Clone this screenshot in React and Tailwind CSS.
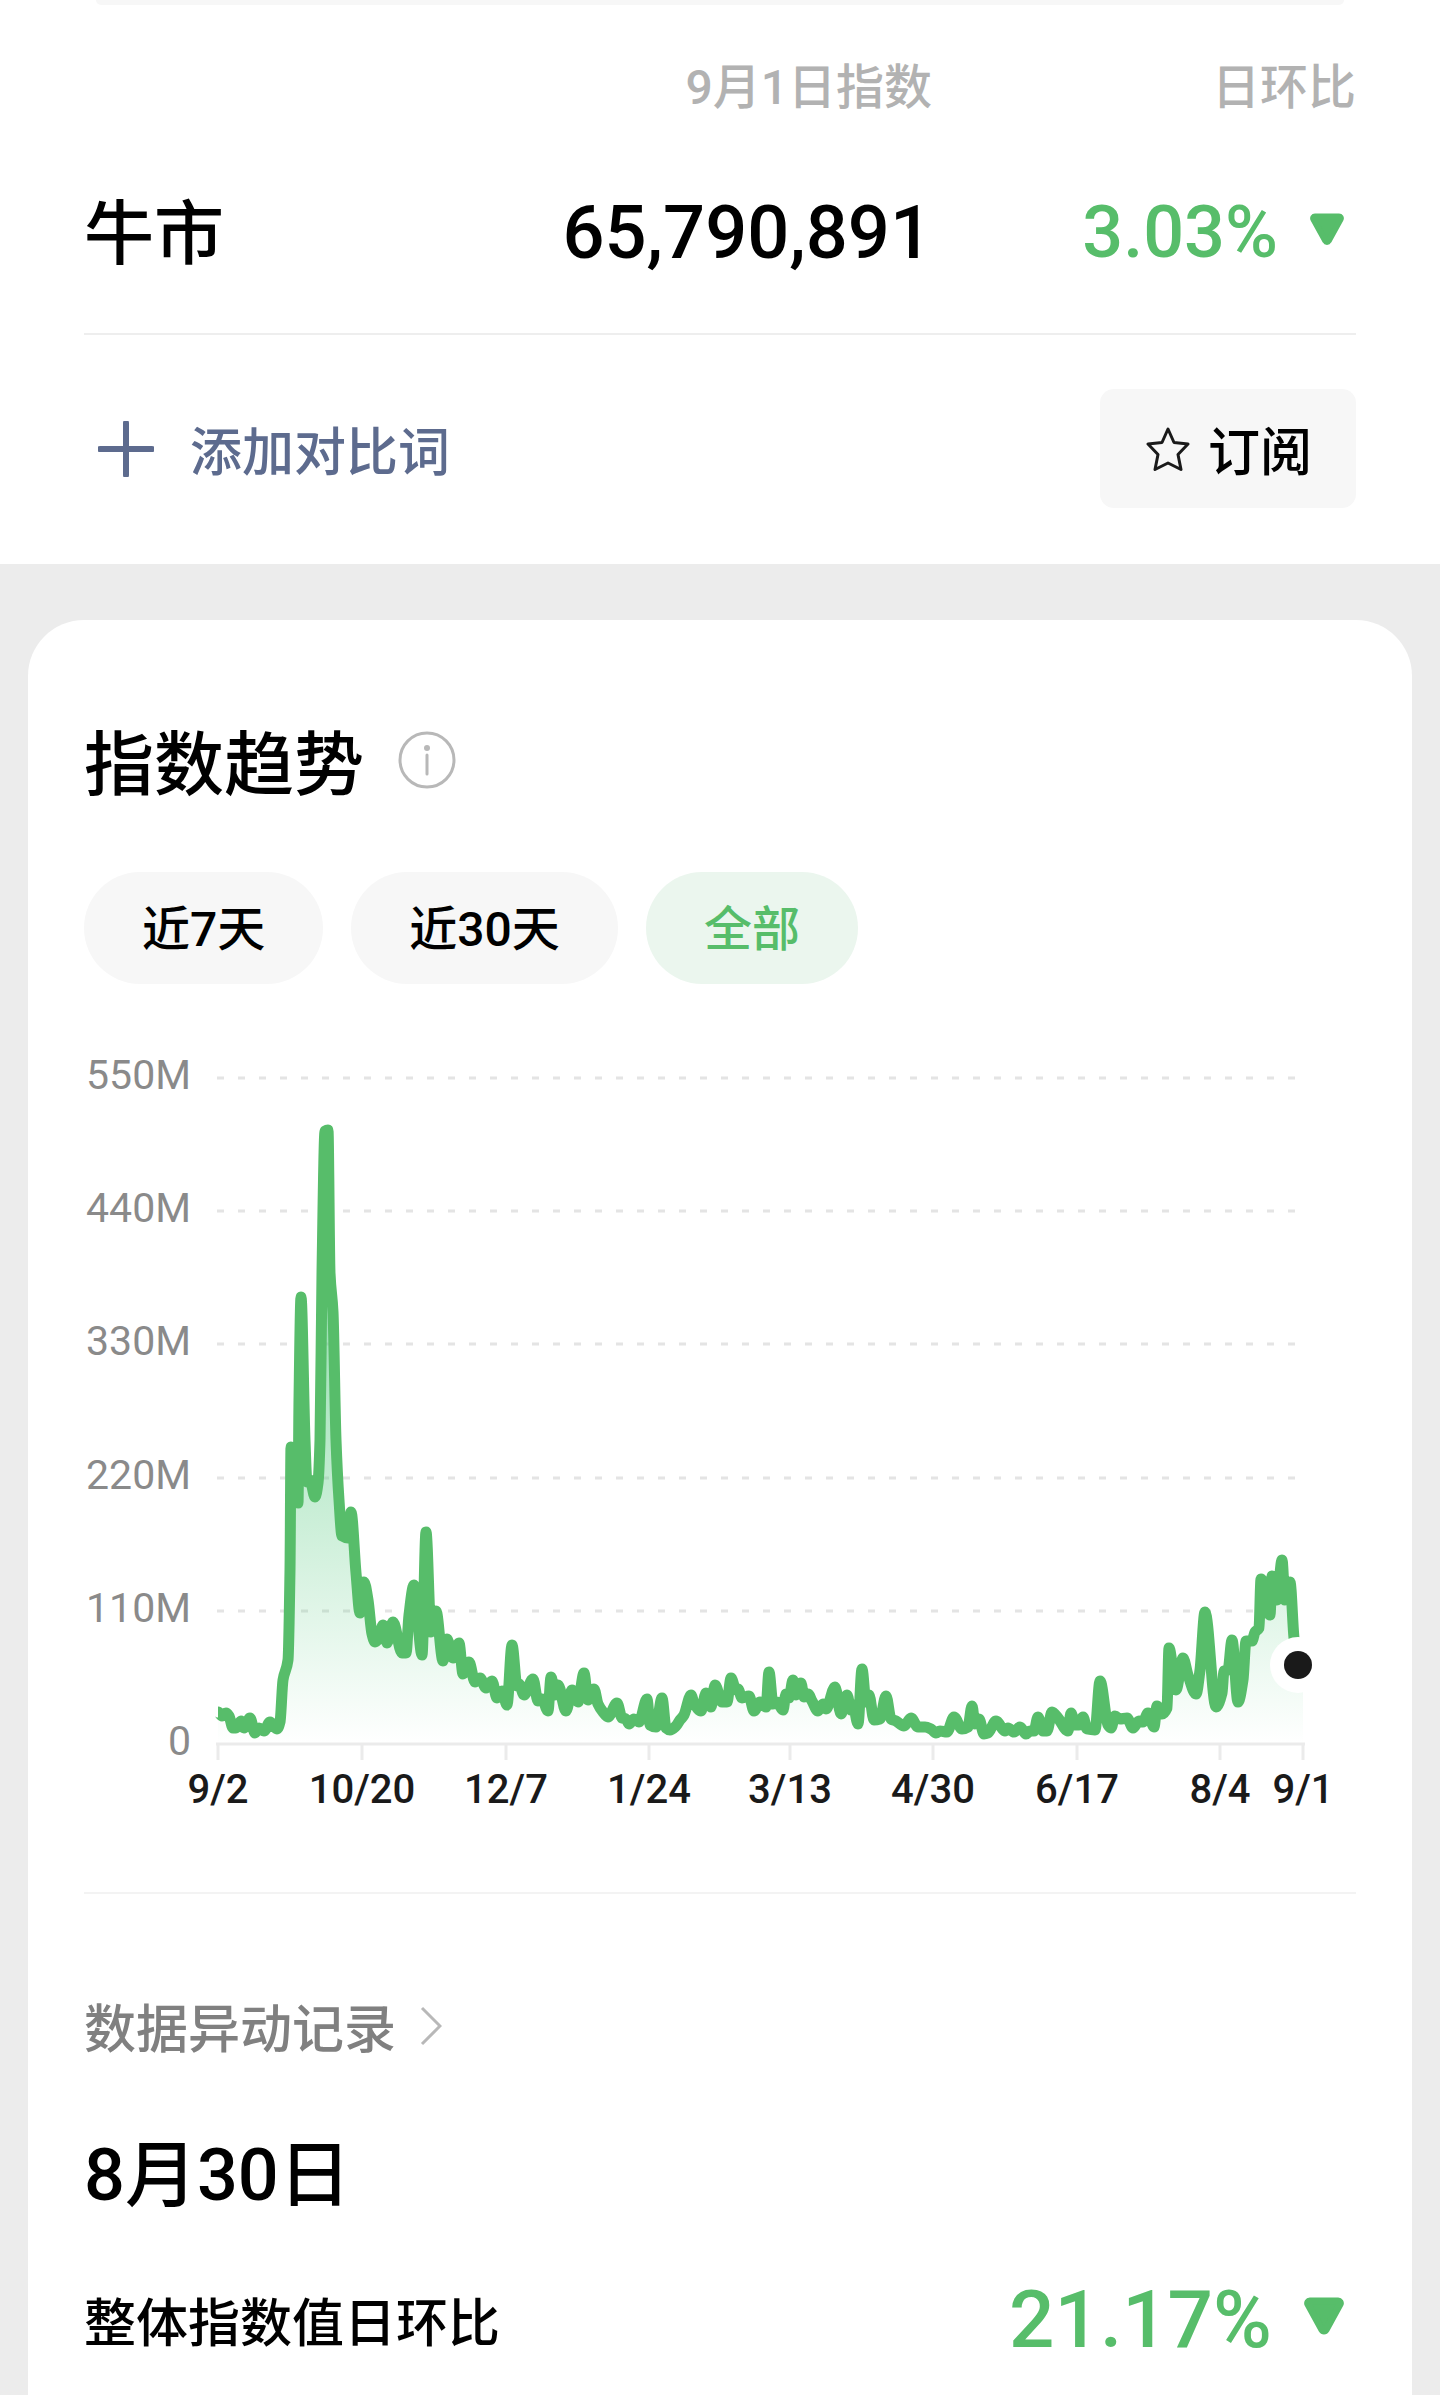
import { useState } from "react";
import clsx from "clsx";

const GREEN = "#57bd6a";

const ranges = [
  { id: "7", label: "近7天" },
  { id: "30", label: "近30天" },
  { id: "all", label: "全部" },
];

const yTicks = [
  { label: "550M", y: 1078 },
  { label: "440M", y: 1211 },
  { label: "330M", y: 1344 },
  { label: "220M", y: 1478 },
  { label: "110M", y: 1611 },
  { label: "0", y: 1744 },
];

const xTicks = [
  { label: "9/2", x: 218 },
  { label: "10/20", x: 362 },
  { label: "12/7", x: 506 },
  { label: "1/24", x: 649 },
  { label: "3/13", x: 790 },
  { label: "4/30", x: 933 },
  { label: "6/17", x: 1077 },
  { label: "8/4", x: 1220 },
  { label: "9/1", x: 1303 },
];

// chart coordinates of the trend line
const points = `
218,1712 222,1716 226,1713 229,1716 233,1728 236,1728 241,1721 244,1728 250,1718 255,1733 259,1728 264,1731
270,1722 277,1729 280,1722 283,1680 288,1660 290,1570 291,1447 298,1503 299,1400 301,1297 305,1440 307,1482
310,1480 315,1497 318,1483 320,1440 322,1273 325,1131 328,1130 330,1273 333,1312 336,1440 339,1500 342,1536
348,1538 351,1512 356,1573 360,1613 364,1582 368,1600 372,1634 375,1642 379,1638 383,1625 387,1643 393,1622
402,1653 406,1653 409,1615 414,1585 422,1655 426,1532 431,1632 436,1611 443,1661 447,1639 453,1658 459,1643
463,1674 469,1662 475,1682 480,1678 486,1688 492,1681 497,1698 502,1691 507,1705 512,1645 517,1686 519,1684
524,1695 533,1679 538,1701 542,1699 548,1711 551,1677 555,1695 558,1685 566,1711 572,1690 578,1702 584,1673
588,1700 594,1689 598,1704 603,1712 608,1717 617,1703 622,1718 626,1719 629,1724 634,1719 639,1722 647,1699
650,1725 656,1727 662,1698 666,1728 670,1730 676,1726 680,1720 684,1715 691,1695 694,1703 701,1711 706,1693
711,1707 715,1685 722,1702 727,1702 731,1678 736,1690 738,1689 742,1698 749,1696 754,1711 760,1702 766,1707
769,1672 773,1704 777,1702 783,1710 786,1694 789,1698 793,1680 796,1695 801,1683 804,1697 808,1694 812,1701
818,1711 823,1704 826,1709 835,1687 841,1714 847,1695 851,1710 853,1705 858,1724 862,1669 866,1702 869,1695
874,1720 880,1719 886,1696 891,1719 896,1721 904,1726 911,1718 918,1727 925,1727 931,1729 936,1733 940,1731
947,1732 954,1717 962,1729 968,1727 972,1706 975,1724 979,1719 984,1734 988,1733 996,1721 1005,1731 1008,1728
1014,1732 1020,1727 1026,1734 1030,1731 1034,1731 1038,1717 1043,1731 1047,1731 1052,1712 1058,1718 1068,1731
1071,1713 1075,1725 1079,1725 1083,1717 1087,1729 1095,1730 1100,1681 1108,1725 1111,1728 1115,1716 1120,1719
1127,1718 1133,1728 1139,1721 1143,1722 1148,1713 1154,1727 1157,1706 1162,1714 1167,1708 1169,1648 1176,1690
1183,1658 1188,1675 1196,1694 1200,1670 1205,1612 1216,1707 1222,1693 1224,1671 1228,1670 1232,1640 1238,1702
1243,1680 1246,1641 1252,1641 1255,1632 1259,1628 1261,1579 1270,1615 1272,1576 1277,1600 1282,1560 1285,1600
1290,1582 1294,1638 1298,1665
`
  .trim()
  .split(/\s+/)
  .map((p) => p.split(",").map(Number));

// monotone cubic curve: flat at every local peak and valley
const curve = (pts) => {
  const slopes = pts.slice(1).map((p, i) => (p[1] - pts[i][1]) / (p[0] - pts[i][0]));
  const tangents = pts.map((_, i) => {
    const a = slopes[i - 1];
    const b = slopes[i];
    if (a === undefined || b === undefined) return 0;
    return a * b <= 0 ? 0 : (2 * a * b) / (a + b);
  });
  return pts.slice(1).reduce((d, [x, y], i) => {
    const [px, py] = pts[i];
    const h = (x - px) / 3;
    return `${d} C${px + h},${py + h * tangents[i]} ${x - h},${y - h * tangents[i + 1]} ${x},${y}`;
  }, `M${pts[0][0]},${pts[0][1]}`);
};

const DownTriangle = ({ className }) => (
  <svg viewBox="0 0 34 32" className={clsx("mb-2", className)} aria-hidden="true">
    <path
      d="M5 3.5H29a1.8 1.8 0 0 1 1.6 2.7L18.6 28a1.8 1.8 0 0 1-3.2 0L3.4 6.2A1.8 1.8 0 0 1 5 3.5Z"
      fill={GREEN}
      stroke={GREEN}
      strokeWidth="6"
      strokeLinejoin="round"
    />
  </svg>
);

const TrendChart = () => {
  const line = curve(points);

  return (
    <svg
      viewBox="84 1050 1272 780"
      className="block w-full"
      role="img"
      aria-label="指数趋势"
    >
      <defs>
        <linearGradient id="area" gradientUnits="userSpaceOnUse" x1="0" y1="1125" x2="0" y2="1744">
          <stop offset="0" stopColor="#57ca80" stopOpacity="0.85" />
          <stop offset="1" stopColor="#57ca80" stopOpacity="0" />
        </linearGradient>
      </defs>

      {/* Grid */}
      {yTicks.map((t) => (
        <g key={t.label}>
          <text x="191" y={t.y + 11} textAnchor="end" fontSize="41" fontWeight="400" fill="#8a8a8a">
            {t.label}
          </text>
          {t.label !== "0" && (
            <path d={`M217 ${t.y}H1297`} stroke="#e4e4e4" strokeWidth="3" strokeDasharray="7 14" />
          )}
        </g>
      ))}

      {/* Axis */}
      <path d="M216 1744H1305" stroke="#ebebeb" strokeWidth="3" />
      {xTicks.map((t) => (
        <g key={t.label}>
          <path d={`M${t.x} 1744V1760`} stroke="#ebebeb" strokeWidth="3" />
          <text x={t.x} y="1803" textAnchor="middle" fontSize="40" fontWeight="500" fill="#1a1a1a">
            {t.label}
          </text>
        </g>
      ))}

      {/* Series */}
      <path d={`${line} L1303,1665 V1742 H218 Z`} fill="url(#area)" />
      <path d={line} fill="none" stroke={GREEN} strokeWidth="11" strokeLinejoin="round" />
      <circle cx="1298" cy="1665" r="28" fill="#fff" />
      <circle cx="1298" cy="1665" r="14" fill="#1a1a1a" />
    </svg>
  );
};

const App = () => {
  const [range, setRange] = useState("all");

  return (
    <div className="flex min-h-screen flex-col bg-[#ececec] font-['Roboto','Noto_Sans_CJK_SC',sans-serif] font-medium text-black">

      {/* Summary */}
      <div className="bg-white">
        <div className="mx-24 h-[5px] rounded-b-full bg-[#f7f7f7]" />
        <div className="px-[84px]">
          <table className="w-full table-fixed border-b-2 border-[#eeeeee]">
            <thead>
              <tr className="text-right text-[48px] leading-[66px] text-[#b2b2b2]">
                <th className="w-1/3" aria-label="关键词" />
                <th className="w-1/3 pt-[50px] pb-5 font-medium">9月1日指数</th>
                <th className="w-1/3 pt-[50px] pb-5 font-medium">日环比</th>
              </tr>
            </thead>
            <tbody>
              <tr className="text-[74px] leading-[96px]">
                <td className="pt-10 pb-14 font-['Noto_Sans_CJK_SC',sans-serif] text-[70px]">牛市</td>
                <td className="pt-11 pb-[52px] text-right">65,790,891</td>
                <td className="pt-11 pb-[52px]">
                  <div className="flex items-center justify-end gap-8 pr-3 text-[72px] text-[#57bd6a]">
                    3.03%
                    <DownTriangle className="w-[34px]" />
                  </div>
                </td>
              </tr>
            </tbody>
          </table>

          <div className="flex items-center justify-between pt-[54px] pb-14 font-['Noto_Sans_CJK_SC',sans-serif]">
            <button className="flex items-center gap-9 pl-3.5 text-[52px] leading-[68px] text-[#5d6b8e]">
              <svg viewBox="0 0 56 56" className="w-14" aria-hidden="true">
                <path d="M28 2V54M2 28H54" stroke="currentColor" strokeWidth="6" strokeLinecap="round" />
              </svg>
              添加对比词
            </button>
            <button className="flex h-[119px] items-center gap-[18px] rounded-[14px] bg-[#f7f7f7] pr-11 pl-[46px] text-[52px] leading-[68px]">
              <svg viewBox="0 0 44 44" className="w-11" aria-hidden="true">
                <path
                  d="M22 2L28 15.500L42 17L32 27.500L35 42.500L22 36L9 42.500L12 27.500L2 17L16 15.500Z"
                  fill="none"
                  stroke="#1a1a1a"
                  strokeWidth="3"
                  strokeLinejoin="round"
                />
              </svg>
              订阅
            </button>
          </div>
        </div>
      </div>

      {/* Trend card */}
      <div className="flex flex-1 flex-col px-7 pt-14">
        <div className="flex-1 rounded-t-[56px] bg-white px-14 pt-[98px]">
          <div className="flex items-center gap-[34px]">
            <h2 className="font-['Noto_Sans_CJK_SC',sans-serif] text-[70px] leading-[84px]">指数趋势</h2>
            <button aria-label="说明">
              <svg viewBox="0 0 58 58" className="w-[58px]" aria-hidden="true">
                <circle cx="29" cy="29" r="27" fill="none" stroke="#b8b8b8" strokeWidth="3" />
                <circle cx="29" cy="17" r="3" fill="#b8b8b8" />
                <path d="M29 24V43" stroke="#b8b8b8" strokeWidth="3" strokeLinecap="round" />
              </svg>
            </button>
          </div>

          <div className="mt-[70px] flex gap-7">
            {ranges.map((r) => (
              <button
                key={r.id}
                onClick={() => setRange(r.id)}
                aria-pressed={range === r.id}
                className={clsx(
                  "h-28 rounded-full px-[58px] pt-1 text-[48px] leading-[66px]",
                  range === r.id ? "bg-[#ebf6ee] text-[#57bd6a]" : "bg-[#f7f7f7]"
                )}
              >
                {r.label}
              </button>
            ))}
          </div>

          <div className="mt-[66px]">
            <TrendChart />
          </div>

          {/* Change records */}
          <div className="mt-[62px] border-t-2 border-[#f3f3f3] pt-[98px]">
            <a
              href="#records"
              className="flex items-center gap-6 font-['Noto_Sans_CJK_SC',sans-serif] text-[52px] leading-[68px] text-[#808080]"
            >
              数据异动记录
              <svg viewBox="0 0 22 40" className="w-[22px]" aria-hidden="true">
                <path d="M2 2L20 20L2 38" fill="none" stroke="#b8b8b8" strokeWidth="3" />
              </svg>
            </a>
            <h3 className="mt-[74px] text-[72px] leading-[84px]">8月30日</h3>
            <div className="mt-[54px] flex items-center justify-between">
              <span className="font-['Noto_Sans_CJK_SC',sans-serif] text-[52px] leading-[68px]">整体指数值日环比</span>
              <div className="flex items-center gap-8 pr-3 text-[80px] leading-[96px] text-[#57bd6a]">
                21.17%
                <DownTriangle className="w-10" />
              </div>
            </div>
          </div>
        </div>
      </div>
    </div>
  );
};

export default App;
